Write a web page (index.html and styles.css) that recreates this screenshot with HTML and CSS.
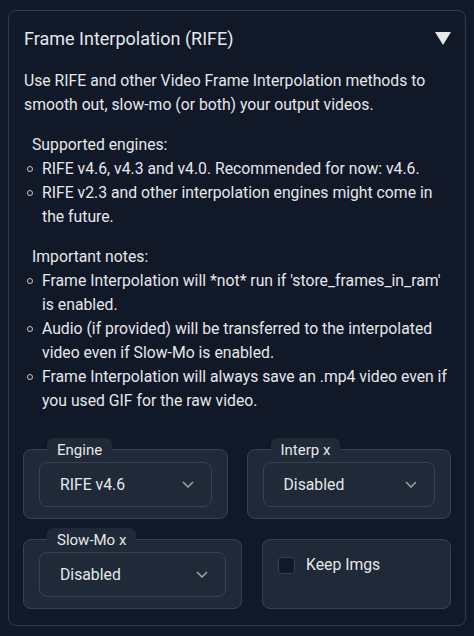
FILE: index.html
```html
<!DOCTYPE html>
<html>
<head>
    <meta charset="utf-8">
    <link rel="stylesheet" href="styles.css">
</head>
<body>
    <div class="accordion">
        <div class="acc-head">
            <span class="acc-title">Frame Interpolation (RIFE)</span>
            <svg class="acc-arrow" width="16" height="14" viewBox="0 0 16 14"><polygon points="0,0 16,0 8,13" fill="#e5e7eb"/></svg>
        </div>

        <div class="md">
            <p class="intro">Use RIFE and other Video Frame Interpolation methods to smooth out, slow-mo (or both) your output videos.</p>
            <p class="sub">Supported engines:</p>
            <ul>
                <li>RIFE v4.6, v4.3 and v4.0. Recommended for now: v4.6.</li>
                <li>RIFE v2.3 and other interpolation engines might come in the future.</li>
            </ul>
            <p class="sub">Important notes:</p>
            <ul>
                <li>Frame Interpolation will *not* run if 'store_frames_in_ram' is enabled.</li>
                <li>Audio (if provided) will be transferred to the interpolated video even if Slow-Mo is enabled.</li>
                <li>Frame Interpolation will always save an .mp4 video even if you used GIF for the raw video.</li>
            </ul>
        </div>

        <div class="row row-top">
            <div class="block">
                <span class="blabel">Engine</span>
                <div class="select"><span>RIFE v4.6</span><svg width="12" height="7" viewBox="0 0 12 7"><polyline points="1,1 6,6 11,1" fill="none" stroke="#9ca3af" stroke-width="1.5"/></svg></div>
            </div>
            <div class="block">
                <span class="blabel">Interp x</span>
                <div class="select"><span>Disabled</span><svg width="12" height="7" viewBox="0 0 12 7"><polyline points="1,1 6,6 11,1" fill="none" stroke="#9ca3af" stroke-width="1.5"/></svg></div>
            </div>
        </div>

        <div class="row row-bottom">
            <div class="block slowmo">
                <span class="blabel">Slow-Mo x</span>
                <div class="select"><span>Disabled</span><svg width="12" height="7" viewBox="0 0 12 7"><polyline points="1,1 6,6 11,1" fill="none" stroke="#9ca3af" stroke-width="1.5"/></svg></div>
            </div>
            <div class="block check-block">
                <label class="check"><span class="box"></span>Keep Imgs</label>
            </div>
        </div>
    </div>
</body>
</html>
```
FILE: styles.css
```css
body { margin: 10px 8px 0; background-color: #111827; color: #e5e7eb; font-family: Roboto, "Liberation Sans", sans-serif; font-size: 15.75px; overflow: hidden; }

.accordion { border: 1px solid #2f3a4b; border-radius: 8px; padding: 0 14px 16px; }
.acc-head { display: flex; justify-content: space-between; align-items: center; padding: 14px 0 0 1px; height: 28px; }
.acc-title { font-size: 18px; line-height: 28px; }
.acc-arrow { margin-top: -1px; }

.md { padding-left: 1px; line-height: 24px; }
.md p { margin: 0; }
.intro { margin-top: 16px !important; }
.sub { padding-left: 8px; margin-top: 16px !important; }
.md ul { list-style: none; margin: 0; padding: 0 0 0 3px; }
.md li { display: flex; gap: 9px; }
.md li::before { content: ""; flex-shrink: 0; width: 4px; height: 4px; border: 1px solid #c3c7cf; border-radius: 50%; margin-top: 9px; }

.row { display: flex; }
.row-top { margin-top: 36px; gap: 19px; }
.row-bottom { margin-top: 20px; gap: 20px; }
.row-top .block { flex: 1; }
.slowmo { flex: 0 0 219px; }
.check-block { flex: 1; }

.block { display: flex; flex-direction: column; background-color: #1f2937; border: 1px solid #374151; border-radius: 8px; padding: 0 15px 11px; height: 70px; box-sizing: border-box; }
.blabel { align-self: flex-start; margin: -12px 0 0 8px; height: 24px; box-sizing: border-box; padding: 2px 10px 0; line-height: 20px; font-size: 15px; background-color: #1f2937; border-radius: 6px; }
.select { display: flex; align-items: center; justify-content: space-between; height: 45px; box-sizing: border-box; padding: 0 17px 0 20px; border: 1px solid #374151; border-radius: 8px; background-color: #1f2937; }

.check-block { padding: 15px 15px 0; }
.check { display: flex; align-items: center; gap: 11px; line-height: 20px; }
.box { width: 17px; height: 17px; box-sizing: border-box; border: 1px solid #374151; border-radius: 4px; background-color: #111827; }
```
